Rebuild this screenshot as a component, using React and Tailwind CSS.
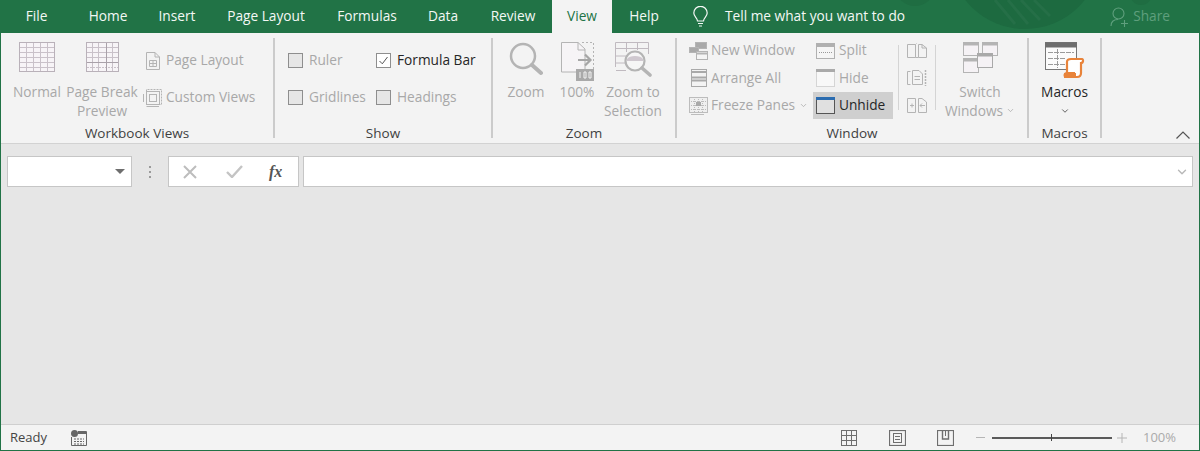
import { ChevronDown } from 'lucide-react';

const tabs = [
  { label: 'File', w: 'w-[71px]' },
  { label: 'Home', w: 'w-[72px]' },
  { label: 'Insert', w: 'w-[66px]' },
  { label: 'Page Layout', w: 'w-[112px]' },
  { label: 'Formulas', w: 'w-[90px]' },
  { label: 'Data', w: 'w-[62px]' },
  { label: 'Review', w: 'w-[78px]' },
  { label: 'View', w: 'w-[60px]', active: true },
  { label: 'Help', w: 'w-[64px]' },
];

const G = '#b4b4b4';

function GridIcon({ breakLine }) {
  const w = breakLine ? 33 : 36;
  const xs = breakLine ? [6, 12, 20, 26] : [7, 14, 21, 28];
  return (
    <svg width={w} height="30" viewBox={`0 0 ${w} 30`} fill="none" stroke="#c9c1c9">
      <rect x="0.5" y="0.5" width={w - 1} height="29" fill="#f7f4f7" stroke="#b9b1b9" />
      {[5, 10, 15, 20, 25].map((y) => <path key={y} d={`M1 ${y}.5H${w - 1}`} strokeDasharray={breakLine && y > 15 ? '2 1' : undefined} />)}
      {xs.map((x) => <path key={x} d={`M${x}.5 1V29`} />)}
      {breakLine && <path d="M20.5 1V29M1 20.5H32" stroke="#a9a1a9" />}
    </svg>
  );
}

function LargeButton({ lines, icon, w, dim = true, chevron, chevronBelow }) {
  return (
    <div className={`${w} flex flex-col items-center pt-[9px] leading-[19px] whitespace-nowrap ${dim ? 'text-[#a8a8a8]' : 'text-[#262626]'}`}>
      <div className="h-[40px] flex items-start justify-center">{icon}</div>
      {lines.map((line) => (
        <span key={line} className="flex items-center gap-[3px]">
          {line}
          {chevron && line === lines[lines.length - 1] && <ChevronDown size={9} strokeWidth={2} />}
        </span>
      ))}
      {chevronBelow && (
        <span className="h-[19px] flex items-center">
          <ChevronDown size={10} strokeWidth={2} className="text-[#444]" />
        </span>
      )}
    </div>
  );
}

function Check({ label, checked, w }) {
  return (
    <div className={`${w} h-[37px] flex items-center gap-[6px] whitespace-nowrap ${checked ? 'text-[#262626]' : 'text-[#a8a8a8]'}`}>
      <div className={`w-[15px] h-[15px] border border-[#8e8e8e] flex items-center justify-center ${checked ? 'bg-white' : 'bg-[#e6e6e6]'}`}>
        {checked && (
          <svg width="11" height="11" viewBox="0 0 11 11" fill="none" stroke="#555"><path d="M1.5 6L4.3 8.8L9.5 2" /></svg>
        )}
      </div>
      {label}
    </div>
  );
}

function Row({ icon, label, h, gap = 'gap-[3px]', on, inset, chevron }) {
  return (
    <div className={`${h} flex items-center ${gap} whitespace-nowrap ${inset ? 'pl-[3px]' : ''} ${on ? 'bg-[#cfcfcf] text-[#262626]' : 'text-[#a8a8a8]'}`}>
      <div className="w-[19px] flex justify-center">{icon}</div>
      {label}
      {chevron && <ChevronDown size={9} strokeWidth={2} className="ml-[1px]" />}
    </div>
  );
}

function Group({ label, w, children }) {
  return (
    <section className={`${w} h-[110px] flex flex-col shrink-0`}>
      <div className="flex-1 flex min-h-0">{children}</div>
      <div className="h-[20px] leading-[20px] text-center text-[#3f3f3f] text-[13.5px] shrink-0">{label}</div>
    </section>
  );
}

const Sep = () => <div className="w-[2px] h-[100px] mt-[5px] bg-[#cbcbcb] shrink-0" />;
const MiniSep = () => <div className="w-px h-[65px] mt-[12px] bg-[#d4d4d4] shrink-0" />;

const PageLayoutIcon = () => (
  <svg width="14" height="18" viewBox="0 0 14 18" fill="none" stroke={G}>
    <path d="M0.5 0.5H9L13.5 5V17.5H0.5Z" /><path d="M9 0.5V5H13.5" /><path d="M3.5 8.5H10.5V14.5H3.5ZM7 8.5V14.5M3.5 11.5H10.5" />
  </svg>
);
const CustomViewsIcon = () => (
  <svg width="19" height="20" viewBox="0 0 19 20" fill="none" stroke={G}>
    <path d="M3.5 3.5V1.5H18.5V16.5H16.5" strokeDasharray="2 1" /><rect x="3.5" y="3.5" width="13" height="13" /><rect x="6.5" y="6.5" width="7" height="7" /><path d="M0.5 6V14M3.5 18.5H16" />
  </svg>
);
const ZoomIcon = () => (
  <svg width="34" height="34" viewBox="0 0 34 34" fill="none" stroke={G}>
    <circle cx="14" cy="14" r="12" strokeWidth="2.5" /><path d="M23 23L32 31" strokeWidth="4" strokeLinecap="round" />
  </svg>
);
const Zoom100Icon = () => (
  <svg width="33" height="39" viewBox="0 0 33 39" fill="none" stroke={G}>
    <path d="M0.5 0.5H17L24 7V30H0.5Z" fill="#f6f4f6" /><path d="M17 0.5V8H24" /><path d="M21 0.5H32.5V30" strokeDasharray="2 2" />
    <path d="M17 18H29M24 12.5L29.5 18L24 23.5" strokeWidth="2.2" stroke="#a6a6a6" />
    <rect x="15" y="27" width="18" height="12" fill="#a9a9a9" stroke="none" />
    <path d="M19 30V36M23 30H25V36H23ZM28 30H30V36H28Z" stroke="#f3f3f3" />
  </svg>
);
const ZoomSelIcon = () => (
  <svg width="37" height="35" viewBox="0 0 37 35" fill="none" stroke="#c0bac0">
    <path d="M0.5 25V0.5H33.5V12" /><path d="M0.5 6.5H33.5M11.5 1V10M22.5 1V8M1 14H12M1 21H10M1 28.5H11" />
    <circle cx="20" cy="19" r="9.5" stroke={G} strokeWidth="2.2" fill="#f6f6f6" />
    <path d="M12 17C14 13 26 13 28 17V19H12Z" fill="#cfc8cf" stroke="none" />
    <path d="M27 26L35 33" stroke={G} strokeWidth="3.6" strokeLinecap="round" />
  </svg>
);
const NewWindowIcon = () => (
  <svg width="19" height="18" viewBox="0 0 19 18" fill="none" stroke={G}>
    <rect x="6.5" y="0.5" width="11" height="6" fill="#a9a9a9" /><rect x="0.5" y="5.5" width="9" height="5" fill="#a9a9a9" /><rect x="7.5" y="9.5" width="11" height="8" fill="#f5f5f5" /><path d="M8 11.5H18" strokeWidth="2" />
  </svg>
);
const ArrangeIcon = () => (
  <svg width="16" height="18" viewBox="0 0 16 18" fill="none" stroke="#a9a9a9">
    <rect x="0.5" y="0.5" width="15" height="17" /><path d="M0 3H16M0 8.5H16M0 11.5H16" strokeWidth="2" />
  </svg>
);
const FreezeIcon = () => (
  <svg width="19" height="18" viewBox="0 0 19 18" fill="none" stroke="#bcbcbc">
    <rect x="0.5" y="0.5" width="18" height="15" fill="#efefef" /><path d="M0 4.5H18M0 8.5H18M0 12.5H18M5.5 0V16M9.5 0V16M13.5 0V16" strokeDasharray="1 1" /><rect x="7" y="5" width="5" height="4" fill="#a9a9a9" stroke="none" /><path d="M2 17.5H15" />
  </svg>
);
const SplitIcon = () => (
  <svg width="19" height="16" viewBox="0 0 19 16" fill="none" stroke="#b0b0b0">
    <rect x="0.5" y="0.5" width="18" height="15" fill="#f5f5f5" /><path d="M0 2.5H19" strokeWidth="3" /><path d="M3 9.5H16" strokeDasharray="1 1" stroke="#999" />
  </svg>
);
const HideIcon = () => (
  <svg width="19" height="18" viewBox="0 0 19 18" fill="none" stroke="#b5b5b5">
    <rect x="0.5" y="1.5" width="18" height="16" strokeDasharray="1 1" fill="#f8f8f8" /><path d="M0 1.5H19" strokeWidth="3" stroke="#aaa" />
  </svg>
);
const UnhideIcon = () => (
  <svg width="19" height="17" viewBox="0 0 19 17" fill="none">
    <rect x="0.5" y="0.5" width="18" height="16" fill="#e0e0e0" stroke="#555" /><path d="M0 1.5H19" strokeWidth="3" stroke="#2b6cb0" />
  </svg>
);
const SideBySideIcon = () => (
  <svg width="20" height="15" viewBox="0 0 20 15" fill="none" stroke={G}>
    <path d="M0.5 1.5H8.5V14.5H0.5ZM11.5 1.5L15 1.5L19.5 5V14.5H11.5Z" /><path d="M15 1.5V5H19.5M8.5 1.5L9.5 0.5M8.5 14.5L11.5 14.5" />
  </svg>
);
const SyncIcon = () => (
  <svg width="20" height="18" viewBox="0 0 20 18" fill="none" stroke={G}>
    <path d="M3.5 2.5H0.5V15.5H3.5M5.5 1.5H12L15.5 5V15.5H5.5Z" /><path d="M7.5 7.5H13M7.5 10.5H13" /><path d="M18.5 1V17" strokeDasharray="2 1" strokeWidth="1.5" />
  </svg>
);
const ResetIcon = () => (
  <svg width="20" height="15" viewBox="0 0 20 15" fill="none" stroke={G}>
    <path d="M0.5 0.5H8.5V14.5H0.5ZM11.5 0.5H15L19.5 4V14.5H11.5Z" /><path d="M3 7.5H7M5 5.5V9.5M13 7.5H18M15 5.5L13 7.5L15 9.5" />
  </svg>
);
const SwitchIcon = () => (
  <svg width="35" height="31" viewBox="0 0 35 31" fill="none" stroke={G}>
    <rect x="0.5" y="0.5" width="15" height="13" fill="#f5f2f5" /><path d="M0 2H16" strokeWidth="3" />
    <rect x="19.5" y="0.5" width="15" height="13" fill="#f5f2f5" /><path d="M19 2H35" strokeWidth="3" />
    <rect x="0.5" y="16.5" width="15" height="14" fill="#f5f2f5" /><path d="M0 18H16" strokeWidth="3" />
    <rect x="14.5" y="11.5" width="15" height="14" fill="#f5f2f5" stroke="#a9a9a9" /><path d="M14 13H30" strokeWidth="3" stroke="#a9a9a9" />
  </svg>
);
const MacrosIcon = () => (
  <svg width="40" height="37" viewBox="0 0 40 37" fill="none">
    <rect x="0.5" y="0.5" width="31" height="27" fill="#fbfbfb" stroke="#777" />
    <path d="M0 3H32" stroke="#6e6e6e" strokeWidth="5" />
    <path d="M3 10.5H29M3 16.5H21M3 22.5H20M12.5 7V26" stroke="#9a9a9a" strokeDasharray="5 1" />
    <path d="M22 34V20C22 17 24 17 26 17H37C38.5 17 38.5 21 36 21V31C36 34 34 35 32 35H21C19 35 19 31 22 31H30" fill="#fff" stroke="#e8833a" strokeWidth="2.2" />
    <path d="M19 31H31V36H19Z" fill="#e8833a" />
  </svg>
);

function StatusIcon({ kind }) {
  if (kind === 'grid') {
    return (
      <svg width="16" height="16" viewBox="0 0 16 16" fill="none" stroke="#6e6e6e"><rect x="0.5" y="0.5" width="15" height="15" /><path d="M5.5 0V16M10.5 0V16M0 5.5H16M0 10.5H16" /></svg>
    );
  }
  if (kind === 'page') {
    return (
      <svg width="17" height="16" viewBox="0 0 17 16" fill="none" stroke="#6e6e6e"><rect x="0.5" y="0.5" width="16" height="15" strokeWidth="1.2" /><rect x="4.5" y="3.5" width="8" height="9" /><path d="M6 6.5H11M6 9.5H11" /></svg>
    );
  }
  return (
    <svg width="17" height="16" viewBox="0 0 17 16" fill="none" stroke="#6e6e6e"><rect x="0.5" y="0.5" width="16" height="15" strokeWidth="1.2" /><path d="M5.5 1V9H11.5V1" strokeWidth="1.4" /><path d="M8.5 1V6" /></svg>
  );
}

export default function App() {
  return (
    <div className="w-[1200px] h-[451px] flex flex-col overflow-hidden bg-[#e6e6e6] border-x border-b border-[#217346] font-['Open_Sans','Noto_Sans',sans-serif] text-[13.7px]">
      <header className="relative h-[33px] -mx-px bg-[#217346] flex shrink-0 text-[#f4f8f5] overflow-hidden">
        <svg className="absolute left-0 top-0" width="1200" height="33" fill="none">
          <circle cx="1025" cy="-47" r="76" fill="#1d6a40" />
          <path d="M995 0L1015 24M1008 0L1028 24M1021 0L1040 20M1034 0L1050 16" stroke="#256f47" strokeWidth="3" />
          <circle cx="915" cy="-14" r="20" fill="#1f6d42" />
          <circle cx="1141" cy="-6" r="11" fill="#1f6d42" />
        </svg>
        <div className="w-px shrink-0" />
        {tabs.map((t) => (
          <div
            key={t.label}
            className={`${t.w} relative h-[33px] flex items-center justify-center shrink-0 ${t.active ? 'bg-[#f3f3f3] text-[#217346]' : ''}`}
          >
            {t.label}
          </div>
        ))}
        <div className="relative flex items-center ml-[17px]">
          <svg width="15" height="22" viewBox="0 0 15 22" fill="none" stroke="#f4f8f5" strokeWidth="1.2">
            <path d="M4.5 15C4.5 12 0.8 10.5 0.8 7A6.7 6.7 0 0 1 14.2 7C14.2 10.5 10.5 12 10.5 15Z" /><path d="M5 17.5H10M6 20H9" />
          </svg>
          <span className="ml-[17px] whitespace-nowrap">Tell me what you want to do</span>
        </div>
        <div className="relative ml-auto mr-[30px] flex items-center gap-[4px] text-[#5f9f7d]">
          <svg width="19" height="20" viewBox="0 0 19 20" fill="none" stroke="#5f9f7d" strokeWidth="1.1">
            <circle cx="8.5" cy="6.5" r="5.5" /><path d="M1 19C1 14.5 4 12.5 8 12.5M11 16.5H18M14.5 13V20" />
          </svg>
          Share
        </div>
      </header>

      <div className="h-[110px] flex shrink-0 bg-[#f3f3f3] border-b border-[#d2d2d2] box-content -mb-px">
        <Group label="Workbook Views" w="w-[272px]">
          <div className="w-[3px]" />
          <LargeButton w="w-[66px]" lines={['Normal']} icon={<GridIcon />} />
          <LargeButton w="w-[64px]" lines={['Page Break', 'Preview']} icon={<GridIcon breakLine />} />
          <div className="ml-[9px] pt-[9px]">
            <Row h="h-[37px]" gap="gap-[4px]" icon={<PageLayoutIcon />} label="Page Layout" />
            <Row h="h-[37px]" gap="gap-[4px]" icon={<CustomViewsIcon />} label="Custom Views" />
          </div>
        </Group>
        <Sep />
        <Group label="Show" w="w-[216px]">
          <div className="pl-[13px] pt-[9px] flex flex-wrap content-start w-full">
            <Check w="w-[88px]" label="Ruler" />
            <Check w="w-[110px]" label="Formula Bar" checked />
            <Check w="w-[88px]" label="Gridlines" />
            <Check w="w-[110px]" label="Headings" />
          </div>
        </Group>
        <Sep />
        <Group label="Zoom" w="w-[182px]">
          <div className="w-[10px]" />
          <LargeButton w="w-[46px]" lines={['Zoom']} icon={<ZoomIcon />} />
          <LargeButton w="w-[56px]" lines={['100%']} icon={<Zoom100Icon />} />
          <LargeButton w="w-[56px]" lines={['Zoom to', 'Selection']} icon={<ZoomSelIcon />} />
        </Group>
        <Sep />
        <Group label="Window" w="w-[350px]">
          <div className="w-[12px]" />
          <div className="w-[124px] pt-[4px]">
            <Row h="h-[27px]" icon={<NewWindowIcon />} label="New Window" />
            <Row h="h-[28px]" icon={<ArrangeIcon />} label="Arrange All" />
            <Row h="h-[27px]" icon={<FreezeIcon />} label="Freeze Panes" chevron />
          </div>
          <div className="w-[85px] pt-[4px]">
            <div className="w-[80px]">
              <Row h="h-[27px]" gap="gap-[4px]" inset icon={<SplitIcon />} label="Split" />
              <Row h="h-[28px]" gap="gap-[4px]" inset icon={<HideIcon />} label="Hide" />
              <Row h="h-[27px]" gap="gap-[4px]" inset icon={<UnhideIcon />} label="Unhide" on />
            </div>
          </div>
          <MiniSep />
          <div className="w-[36px] pt-[4px] flex flex-col items-center">
            <div className="h-[27px] flex items-center"><SideBySideIcon /></div>
            <div className="h-[28px] flex items-center"><SyncIcon /></div>
            <div className="h-[27px] flex items-center"><ResetIcon /></div>
          </div>
          <MiniSep />
          <LargeButton w="w-[88px]" lines={['Switch', 'Windows']} icon={<SwitchIcon />} chevron />
        </Group>
        <Sep />
        <Group label="Macros" w="w-[71px]">
          <LargeButton w="w-full" dim={false} lines={['Macros']} icon={<MacrosIcon />} chevronBelow />
        </Group>
        <Sep />
        <div className="ml-auto mr-[9px] self-end mb-[4px]">
          <svg width="14" height="8" viewBox="0 0 14 8" fill="none" stroke="#555" strokeWidth="1.2"><path d="M0.5 7.5L7 1L13.5 7.5" /></svg>
        </div>
      </div>

      <div className="flex-1 min-h-0 pt-[13px] pl-[6px]">
        <div className="flex h-[31px]">
          <div className="w-[125px] bg-white border border-[#c6c6c6] flex items-center justify-end pr-[6px]">
            <div className="w-0 h-0 border-x-[5px] border-x-transparent border-t-[5px] border-t-[#6e6e6e]" />
          </div>
          <div className="w-[36px] flex flex-col items-center justify-center gap-[3px]">
            <div className="w-[2px] h-[2px] bg-[#9a9a9a]" />
            <div className="w-[2px] h-[2px] bg-[#9a9a9a]" />
            <div className="w-[2px] h-[2px] bg-[#9a9a9a]" />
          </div>
          <div className="w-[131px] bg-white border border-[#c6c6c6] flex items-center pl-[14px]">
            <svg width="14" height="14" viewBox="0 0 14 14" fill="none" stroke="#bdbdbd" strokeWidth="2"><path d="M1 1L13 13M13 1L1 13" /></svg>
            <svg className="ml-[29px]" width="17" height="13" viewBox="0 0 17 13" fill="none" stroke="#c4c4c4" strokeWidth="2.4"><path d="M1 7L6 12L16 1" /></svg>
            <span className="ml-[26px] font-['Liberation_Serif',serif] italic font-bold text-[16px] text-[#555]">fx</span>
          </div>
          <div className="w-[890px] ml-[4px] bg-white border border-[#c6c6c6] flex items-center justify-end pr-[3px] text-[#b8b8b8]">
            <ChevronDown size={14} strokeWidth={2.4} />
          </div>
        </div>
      </div>

      <footer className="h-[26px] shrink-0 bg-[#f3f3f3] border-t border-[#cfcfcf] flex items-center text-[13px] text-[#444]">
        <span className="ml-[9px] w-[61px]">Ready</span>
        <svg width="16" height="16" viewBox="0 0 16 16" fill="none">
          <circle cx="3.5" cy="3.5" r="3.5" fill="#666" /><path d="M7 1.5H15.5V15.5H0.5V7" stroke="#666" /><path d="M3 9H13M3 11.5H13M3 14H13" stroke="#666" strokeDasharray="2 1" /><path d="M7 3H15" stroke="#666" strokeWidth="2" />
        </svg>
        <div className="ml-auto flex items-center">
          <StatusIcon kind="grid" />
          <div className="w-[32px]" />
          <StatusIcon kind="page" />
          <div className="w-[31px]" />
          <StatusIcon kind="break" />
          <div className="w-[22px]" />
          <div className="w-[9px] h-px bg-[#b5b5b5]" />
          <div className="w-[120px] h-[2px] ml-[7px] bg-[#5a5a5a] flex justify-center items-center">
            <div className="w-px h-[7px] bg-[#444]" />
          </div>
          <svg className="ml-[5px]" width="10" height="10" viewBox="0 0 10 10" stroke="#b5b5b5"><path d="M0 5H10M5 0V10" /></svg>
          <span className="ml-[16px] mr-[23px] text-[#aaa]">100%</span>
        </div>
      </footer>
    </div>
  );
}
